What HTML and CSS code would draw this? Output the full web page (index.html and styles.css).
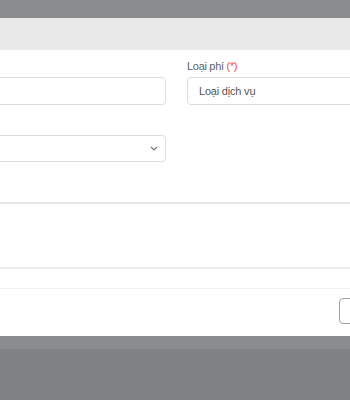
FILE: index.html
```html
<!DOCTYPE html>
<html lang="vi">
<head>
    <meta charset="UTF-8">
    <meta name="viewport" content="width=device-width, initial-scale=1.0">
    <title>Thêm phí</title>
    <link rel="stylesheet" href="styles.css">
</head>
<body>
    <div class="modal">
        <div class="modal-header"></div>
        <div class="modal-body">
            <div class="form-grid">
                <div class="form-group">
                    <label class="label-empty"></label>
                    <input type="text" class="form-control">
                </div>
                <div class="form-group">
                    <label>Loại phí <span class="required">(*)</span></label>
                    <input type="text" class="form-control" value="Loại dịch vụ">
                </div>
                <div class="form-group">
                    <label class="label-empty"></label>
                    <div class="form-select">
                        <svg width="8" height="5" viewBox="0 0 8 5">
                            <path d="M1 1 L4 4 L7 1" fill="none" stroke="#777" stroke-width="1.2"/>
                        </svg>
                    </div>
                </div>
            </div>
        </div>
        <div class="detail-block"></div>
        <div class="modal-footer">
            <button class="btn btn-outline"></button>
            <button class="btn btn-primary"></button>
        </div>
    </div>
    <div class="page-bottom"></div>
</body>
</html>
```

FILE: styles.css
```css
html, body {
    overflow: hidden;
}
body {
    margin: 0;
    height: 400px;
    background: #8a8d8f;
    font-family: 'Liberation Sans', Arial, sans-serif;
}
.modal {
    width: 651px;
    margin: 18px 0 0 -149px;
    background: #ffffff;
}
.modal-header {
    height: 32px;
    background: #e9e9e9;
}
.modal-body {
    padding: 9px 15px 40px;
}
.form-grid {
    display: grid;
    grid-template-columns: 300px 300px;
    column-gap: 21px;
    row-gap: 12px;
}
label {
    display: block;
    height: 14px;
    font-size: 11px;
    line-height: 14px;
    letter-spacing: -0.3px;
    margin-bottom: 4px;
    color: #5f5f5f;
}
.required {
    color: #f04b4b;
}
.form-control {
    display: block;
    width: 100%;
    height: 28px;
    box-sizing: border-box;
    border: 1px solid #dcdcdc;
    border-radius: 4px;
    padding: 0 10px 0 11px;
    font-family: inherit;
    font-size: 11px;
    letter-spacing: -0.2px;
    color: #555;
    outline: none;
}
.form-select {
    height: 27px;
    box-sizing: border-box;
    border: 1px solid #dcdcdc;
    border-radius: 4px;
    padding: 0 7px 0 10px;
    display: flex;
    align-items: center;
    justify-content: flex-end;
}
.detail-block {
    height: 63px;
    border-top: 2px solid #e6e6e6;
    border-bottom: 2px solid #ebebeb;
    margin-bottom: 19px;
}
.modal-footer {
    border-top: 1px solid #f2f2f2;
    padding: 9px 15px 12px;
    display: flex;
    justify-content: flex-end;
    gap: 6px;
}
.btn {
    height: 26px;
    border-radius: 4px;
    padding: 0 12px;
}
.btn-outline {
    width: 60px;
    background: #ffffff;
    border: 1px solid #a0a0a0;
}
.btn-primary {
    width: 82px;
    background: #2f7de1;
    border: 1px solid #2f7de1;
}
.page-bottom {
    margin-top: 13px;
    height: 60px;
    background: #808385;
}
```
